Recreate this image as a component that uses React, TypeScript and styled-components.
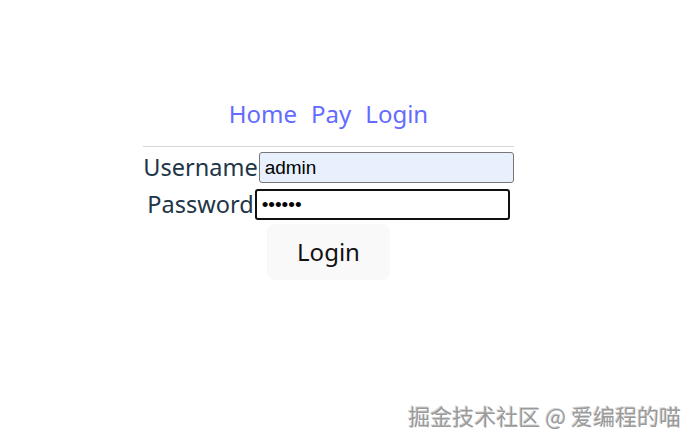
import React, { useState } from "react";
import styled, { createGlobalStyle } from "styled-components";

const GlobalStyle = createGlobalStyle`
    html, body {
        margin: 0;
        padding: 0;
        background: #ffffff;
        font-family: "Noto Sans", "Open Sans", sans-serif;
        color: #213547;
    }
`;

export default function App() {
    const [username, setUsername] = useState("admin");
    const [password, setPassword] = useState("123456");

    return (
        <>
            <GlobalStyle />
            <Page>
                <Container>
                    <Nav>
                        <NavLink href="#">Home</NavLink>
                        <NavLink href="#">Pay</NavLink>
                        <NavLink href="#">Login</NavLink>
                    </Nav>
                    <Divider />
                    <Form onSubmit={(e) => e.preventDefault()}>
                        <Row>
                            <Label>Username</Label>
                            <Input
                                $filled
                                value={username}
                                onChange={(e) => setUsername(e.target.value)}
                            />
                        </Row>
                        <Row>
                            <Label>Password</Label>
                            <Input
                                $focused
                                type="password"
                                value={password}
                                onChange={(e) => setPassword(e.target.value)}
                            />
                        </Row>
                        <SubmitButton type="submit">Login</SubmitButton>
                    </Form>
                </Container>
                <Watermark>掘金技术社区 @ 爱编程的喵</Watermark>
            </Page>
        </>
    );
}

const Page = styled.div`
    position: relative;
    width: 693px;
    height: 445px;
    overflow: hidden;
`;

const Container = styled.div`
    display: flex;
    flex-direction: column;
    align-items: center;
    width: 371px;
    margin-left: 143px;
    padding-top: 95px;
`;

const Nav = styled.nav`
    display: flex;
    gap: 14px;
    height: 36px;
    align-items: center;
`;

const NavLink = styled.a`
    font-size: 24px;
    color: #646cff;
    text-decoration: none;
`;

const Divider = styled.hr`
    width: 100%;
    margin: 15px 0 5px;
    border: none;
    border-top: 1px solid #d6d6d6;
`;

const Form = styled.form`
    display: flex;
    flex-direction: column;
    align-items: center;
    width: 100%;
    gap: 6px;
`;

const Row = styled.div`
    display: flex;
    align-items: center;
    justify-content: center;
    width: 100%;
`;

const Label = styled.label`
    font-size: 23.5px;
    line-height: 31px;
    color: #213547;
`;

const Input = styled.input<{ $filled?: boolean; $focused?: boolean }>`
    box-sizing: border-box;
    width: 255px;
    height: 31px;
    margin-left: 1px;
    padding: 0 5px;
    font-family: "Liberation Sans", Arial, sans-serif;
    font-size: 19px;
    color: #000;
    border-radius: 3px;
    outline: none;
    background: ${({ $filled }) => ($filled ? "#e8f0fe" : "#ffffff")};
    border: ${({ $focused }) => ($focused ? "2px solid #101010" : "1px solid #767676")};
`;

const SubmitButton = styled.button`
    margin-top: -2px;
    padding: 13px 29px;
    font-family: "Noto Sans", "Open Sans", sans-serif;
    font-size: 24px;
    line-height: 28px;
    color: #111;
    background: #f9f9f9;
    border: 1px solid transparent;
    border-radius: 8px;
    cursor: pointer;
`;

const Watermark = styled.div`
    position: absolute;
    right: 12px;
    bottom: 16px;
    font-family: "Noto Sans CJK SC", sans-serif;
    font-size: 22px;
    line-height: 28px;
    color: #9a9a9a;
    text-shadow: 1px 1px 0 #ffffff, -1px -1px 0 #d4d4d4;
`;
